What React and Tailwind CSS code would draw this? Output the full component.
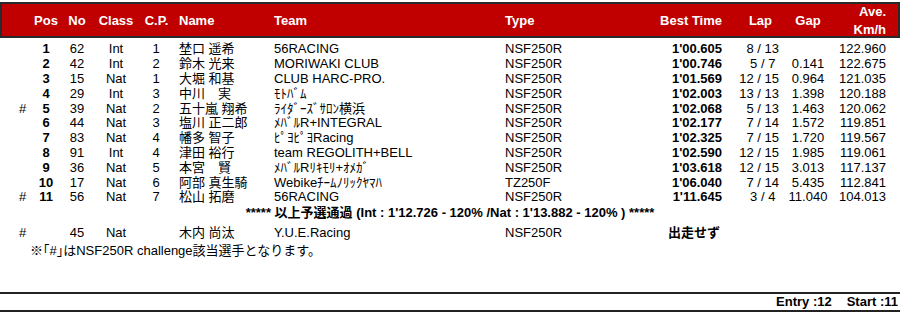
import React from "react";

const rows = [
  { m: "", pos: "1", no: "62", cls: "Int", cp: "1", name: "埜口 遥希", team: "56RACING", type: "NSF250R", best: "1'00.605", lap: "8 / 13", gap: "", ave: "122.960" },
  { m: "", pos: "2", no: "42", cls: "Int", cp: "2", name: "鈴木 光来", team: "MORIWAKI CLUB", type: "NSF250R", best: "1'00.746", lap: "5 / 7\u00a0", gap: "0.141", ave: "122.675" },
  { m: "", pos: "3", no: "15", cls: "Nat", cp: "1", name: "大堀 和基", team: "CLUB HARC-PRO.", type: "NSF250R", best: "1'01.569", lap: "12 / 15", gap: "0.964", ave: "121.035" },
  { m: "", pos: "4", no: "29", cls: "Int", cp: "3", name: "中川\u3000実", team: "ﾓﾄﾊﾞﾑ", type: "NSF250R", best: "1'02.003", lap: "13 / 13", gap: "1.398", ave: "120.188" },
  { m: "#", pos: "5", no: "39", cls: "Nat", cp: "2", name: "五十嵐 翔希", team: "ﾗｲﾀﾞｰｽﾞｻﾛﾝ横浜", type: "NSF250R", best: "1'02.068", lap: "5 / 13", gap: "1.463", ave: "120.062" },
  { m: "", pos: "6", no: "44", cls: "Nat", cp: "3", name: "塩川 正二郎", team: "ﾒﾊﾞﾙR+INTEGRAL", type: "NSF250R", best: "1'02.177", lap: "7 / 14", gap: "1.572", ave: "119.851" },
  { m: "", pos: "7", no: "83", cls: "Nat", cp: "4", name: "幡多 智子", team: "ﾋﾟﾖﾋﾟﾖRacing", type: "NSF250R", best: "1'02.325", lap: "7 / 15", gap: "1.720", ave: "119.567" },
  { m: "", pos: "8", no: "91", cls: "Int", cp: "4", name: "津田 裕行", team: "team REGOLITH+BELL", type: "NSF250R", best: "1'02.590", lap: "12 / 15", gap: "1.985", ave: "119.061" },
  { m: "", pos: "9", no: "36", cls: "Nat", cp: "5", name: "本宮\u3000賢", team: "ﾒﾊﾞﾙRﾘｷﾓﾘ+ｵﾒｶﾞ", type: "NSF250R", best: "1'03.618", lap: "12 / 15", gap: "3.013", ave: "117.137" },
  { m: "", pos: "10", no: "17", cls: "Nat", cp: "6", name: "阿部 真生騎", team: "Webikeﾁｰﾑﾉﾘｯｸﾔﾏﾊ", type: "TZ250F", best: "1'06.040", lap: "7 / 14", gap: "5.435", ave: "112.841" },
  { m: "#", pos: "11", no: "56", cls: "Nat", cp: "7", name: "松山 拓磨", team: "56RACING", type: "NSF250R", best: "1'11.645", lap: "3 / 4\u00a0", gap: "11.040", ave: "104.013" },
];

function Row({ r }) {
  return (
    <div className="flex items-center h-[14.8px] whitespace-nowrap">
      <div className="w-[30px] pl-[19px]">{r.m}</div>
      <div className="w-[32px] text-center font-bold">{r.pos}</div>
      <div className="w-[30px] text-center">{r.no}</div>
      <div className="w-[48px] text-center">{r.cls}</div>
      <div className="w-[32px] text-center">{r.cp}</div>
      <div className="w-[102px] pl-[7px]">{r.name}</div>
      <div className="w-[231px]">{r.team}</div>
      <div className="w-[135px]">{r.type}</div>
      <div className="w-[82px] text-right font-bold">{r.best}</div>
      <div className="w-[57px] text-right">{r.lap}</div>
      <div className="w-[58px] text-center">{r.gap}</div>
      <div className="w-[49px] text-right">{r.ave}</div>
    </div>
  );
}

export default function App() {
  return (
    <div className="w-[900px] h-[313px] bg-white text-black text-[13px] pt-[2px] overflow-hidden font-['Liberation_Sans','Noto_Sans_CJK_JP',sans-serif]">
      <div className="flex items-center h-[36px] pt-[2px] border-2 border-[#2a2a2a] bg-[#c00000] text-white font-bold whitespace-nowrap">
        <div className="w-[28px]"></div>
        <div className="w-[32px] text-center">Pos</div>
        <div className="w-[30px] text-center">No</div>
        <div className="w-[48px] text-center">Class</div>
        <div className="w-[32px] text-center pl-[1px]">C.P.</div>
        <div className="w-[102px] pl-[7px]">Name</div>
        <div className="w-[231px]">Team</div>
        <div className="w-[135px]">Type</div>
        <div className="w-[82px] text-right">Best Time</div>
        <div className="w-[57px] text-right pr-[7px]">Lap</div>
        <div className="w-[58px] text-center">Gap</div>
        <div className="w-[49px] text-right flex flex-col leading-[18px] -mt-[1px]">
          <span>Ave.</span>
          <span>Km/h</span>
        </div>
      </div>
      <div className="mt-[3.8px]">
        {rows.map((r, i) => (
          <Row key={i} r={r} />
        ))}
      </div>
      <div className="h-[16px] flex items-center justify-center font-bold whitespace-nowrap">
        ***** 以上予選通過 (Int : 1'12.726 - 120% /Nat : 1'13.882 - 120% ) *****
      </div>
      <div className="flex items-center h-[14.8px] mt-[4.5px] whitespace-nowrap">
        <div className="w-[30px] pl-[19px]">#</div>
        <div className="w-[32px]"></div>
        <div className="w-[30px] text-center">45</div>
        <div className="w-[48px] text-center">Nat</div>
        <div className="w-[32px]"></div>
        <div className="w-[102px] pl-[7px]">木内 尚汰</div>
        <div className="w-[231px]">Y.U.E.Racing</div>
        <div className="w-[135px]">NSF250R</div>
        <div className="w-[82px] text-right font-bold pr-[2px]">出走せず</div>
      </div>
      <div className="h-[14.8px] mt-[3.5px] flex items-center pl-[30px] whitespace-nowrap">
        ※｢#｣はNSF250R challenge該当選手となります。
      </div>
      <div className="mt-[34px] h-[20px] border-t-2 border-b-2 border-[#222] flex items-center justify-end gap-[15px] pr-[2px] font-bold whitespace-nowrap">
        <span>Entry :12</span>
        <span>Start :11</span>
      </div>
    </div>
  );
}
